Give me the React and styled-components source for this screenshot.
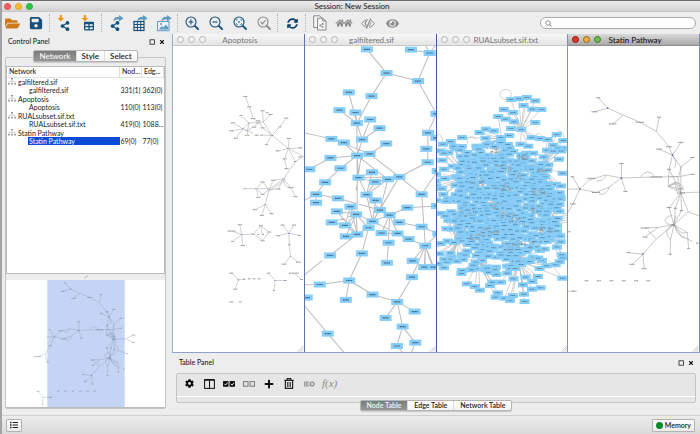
import { useId, useState } from 'react'
import styled, { createGlobalStyle, css } from 'styled-components'
import {
  FaCog, FaEye, FaFolderOpen, FaHome, FaList, FaPlus, FaSave,
  FaShareAlt, FaSyncAlt, FaTable, FaTimes,
} from 'react-icons/fa'

const theme = {
  navy: '#15507c',
  sky: '#5f9cc4',
  orange: '#f0961e',
  grey: '#8b8b8b',
  panel: '#ededed',
  line: '#c4c4c4',
  node: '#86cdf8',
  font: "Lato, 'Open Sans', sans-serif",
}

const GlobalStyle = createGlobalStyle`
  *, *::before, *::after { box-sizing: border-box; }
  body { margin: 0; background: #8f8f93; }
  button, input { font: inherit; color: inherit; }
`

const Shell = styled.div`
  min-height: 100vh;
  display: flex;
  flex-direction: column;
  border-top: 1px solid #6e6a70;
  border-left: 2px solid #a3a3a6;
  background: ${theme.panel};
  color: #1c1c1c;
  font-family: ${theme.font};
  font-size: 7px;
  line-height: 9px;
`

const TitleBar = styled.header`
  height: 11px;
  display: grid;
  grid-template-columns: 60px 1fr 60px;
  align-items: center;
  padding-left: 2px;
  background: linear-gradient(#ececec, #d2d2d2);
  border-bottom: 1px solid #c6c6c6;
`

const Lights = styled.div`
  display: flex;
  gap: 4px;
`

const Light = styled.button`
  width: 7px;
  height: 7px;
  padding: 0;
  border: 1px solid ${p => p.$edge};
  border-radius: 50%;
  background: ${p => p.$fill};
`

const AppTitle = styled.h1`
  margin: 0;
  font-size: 8px;
  font-weight: 400;
  text-align: center;
`

const Toolbar = styled.div`
  height: 22px;
  display: flex;
  align-items: center;
  padding: 0 4px 0 2px;
  background: ${theme.panel};
`

const ToolGroup = styled.div`
  display: flex;
  align-items: center;
  gap: 8px;

  & + & {
    margin-left: 5px;
    padding-left: 6px;
    border-left: 1px dotted #b5b5b5;
  }
`

const ToolButton = styled.button`
  width: 16px;
  height: 18px;
  padding: 0;
  border: 0;
  background: none;
  display: flex;
  align-items: center;
  justify-content: center;
  color: ${p => p.$color || theme.navy};

  svg { overflow: visible; flex: none; }
`

const SearchBox = styled.label`
  width: 156px;
  height: 12px;
  margin-left: auto;
  display: flex;
  align-items: center;
  gap: 3px;
  padding: 0 4px;
  border: 1px solid #a9a9a9;
  border-radius: 6px;
  background: #fff;
`

const SearchInput = styled.input`
  flex: 1;
  min-width: 0;
  height: 8px;
  padding: 0;
  border: 0;
  outline: 0;
  background: none;
`

const Body = styled.div`
  flex: 1;
  display: flex;
  min-height: 0;
`

const Sidebar = styled.aside`
  width: 164px;
  flex: none;
  display: flex;
  flex-direction: column;
  padding: 3px 0 6px 3px;
`

const PanelHeader = styled.div`
  display: flex;
  align-items: center;
  padding: ${p => p.$pad};
`

const PanelTitle = styled.h2`
  margin: 0;
  flex: 1;
  font-size: 7px;
  font-weight: 500;
`

const HeaderButton = styled.button`
  width: 6px;
  height: 6px;
  margin-left: 4px;
  padding: 0;
  border: 0;
  background: none;
  display: flex;
  color: #000;
`

const TabList = styled.div`
  align-self: center;
  display: flex;
  position: relative;
  z-index: 1;
  border: 1px solid #b4b4b4;
  border-radius: 2px;
  background: linear-gradient(#fff, #f4f4f4);
  box-shadow: 0 1px 1px #c9c9c9;
`

const Tab = styled.button`
  height: ${p => p.$height}px;
  padding: 0 ${p => p.$pad}px;
  border: 0;
  display: flex;
  align-items: center;
  background: none;
  font-size: ${p => p.$size}px;
  font-weight: 600;
  line-height: 9px;

  & + & { border-left: 1px solid #ddd; }

  ${p => p['aria-selected'] && css`
    color: #f4f4f4;
    background: linear-gradient(#7d7d7d, #959595);
  `}
`

const SidebarBox = styled.div`
  flex: 1;
  display: flex;
  flex-direction: column;
  margin-top: -5px;
  padding-top: 8px;
  border: 1px solid ${theme.line};
  border-radius: 2px;
`

const TableWell = styled.div`
  flex: 1;
  background: #fff;
  border: 1px solid #b9b9b9;
`

const NetworkTable = styled.table`
  width: 100%;
  table-layout: fixed;
  border-collapse: collapse;
`

const HeadCell = styled.th`
  width: ${p => p.$width || 'auto'};
  height: 10px;
  padding: 0 0 0 2px;
  border-right: 1px solid #ddd;
  border-bottom: 1px solid #e2e2e2;
  font-weight: 500;
  text-align: left;
  line-height: 9px;
`

const Row = styled.tr`
  height: ${p => (p.$group ? 9 : 8)}px;
  line-height: 8px;
`

const NameCell = styled.td`
  padding: 0 0 0 ${p => (p.$group ? 1 : 21)}px;
  white-space: nowrap;
`

const GroupName = styled.span`
  display: flex;
  align-items: center;
  gap: 2px;
`

const ChildName = styled.span`
  display: block;
  padding-left: 1px;
  color: ${p => (p.$selected ? '#fff' : 'inherit')};
  background: ${p => (p.$selected ? '#0a4bd6' : 'none')};
`

const CountCell = styled.td`
  padding: 0 0 0 1px;
  white-space: nowrap;
`

const Grip = styled.div`
  height: 6px;
  display: flex;
  align-items: center;
  justify-content: center;
  color: #999;
`

const Preview = styled.div`
  height: 128px;
  background: #fff;
  border-bottom: 1px solid #bbb;

  svg { display: block; width: 100%; height: 100%; }
`

const Main = styled.main`
  flex: 1;
  min-width: 0;
  display: flex;
  flex-direction: column;
  margin-left: 6px;
`

const Desk = styled.section`
  flex: 1;
  display: grid;
  grid-template-columns: repeat(4, minmax(0, 1fr));
  border-left: 1px solid #9fadcb;
  border-bottom: 1px solid #8fa2cc;
`

const Frame = styled.article`
  display: flex;
  flex-direction: column;
  border-right: 1px solid ${p => p.$edge};
  background: #fff;
`

const FrameBar = styled.div`
  height: 12px;
  display: grid;
  grid-template-columns: 33px 1fr 33px;
  align-items: center;
  padding: 0 1px 0 4px;
  border-bottom: 1px solid ${p => (p.$active ? '#8d8d8d' : '#c9c9c9')};
  background: ${p => (p.$active ? 'linear-gradient(#d9d9d9, #a9a9a9)' : 'linear-gradient(#f7f7f7, #e4e4e4)')};
`

const FrameTitle = styled.h3`
  margin: 0;
  font-size: 8px;
  line-height: 10px;
  font-weight: ${p => (p.$active ? 600 : 400)};
  color: ${p => (p.$active ? '#222' : '#757575')};
  text-align: center;
  white-space: nowrap;
`

const Canvas = styled.div`
  flex: 1;
  display: flex;
  min-height: 300px;

  svg { width: 100%; height: auto; flex: 1; }
`

const TablePanel = styled.section`
  display: flex;
  flex-direction: column;
  padding: 5px 4px 4px;
`

const TableBox = styled.div`
  height: 30px;
  margin-top: 6px;
  border: 1px solid ${theme.line};
  border-radius: 2px;
  background: #e6e6e6;
`

const TableTools = styled.div`
  height: 23px;
  display: flex;
  align-items: center;
  gap: 6px;
  padding: 0 5px 3px;
  border-bottom: 1px solid #fff;
`

const TableTool = styled.button`
  min-width: 14px;
  height: 14px;
  padding: 0;
  border: 0;
  background: none;
  display: flex;
  align-items: center;
  justify-content: center;
  color: ${p => p.$color || '#0a0a0a'};
`

const Fx = styled.span`
  font-family: 'Liberation Serif', serif;
  font-style: italic;
  font-size: 11px;
`

const BottomTabs = styled.div`
  align-self: center;
  display: flex;
  margin-top: -3px;
`

const StatusBar = styled.footer`
  height: 19px;
  display: flex;
  align-items: center;
  justify-content: space-between;
  padding: 0 5px 0 4px;
  border-top: 1px solid #d0d0d0;
  background: linear-gradient(#ececec, #dadada);
`

const StatusButton = styled.button`
  height: 13px;
  padding: 0 3px;
  display: flex;
  align-items: center;
  gap: 2px;
  border: 1px solid #b3b3b3;
  border-radius: 1px;
  background: linear-gradient(#fbfbfb, #ececec);
  font-weight: 600;
`

const Dot = styled.span`
  width: 7px;
  height: 7px;
  border-radius: 50%;
  background: #0b8a2c;
`

/* ---------- icons ---------- */

const DownArrow = ({ x = 0 }) => (
  <path transform={`translate(${x} 0)`} fill={theme.orange} d="M2.2 0h2.2v3h2.2L3.3 6.6 0 3h2.2z" />
)

const ShareArrow = () => (
  <path fill={theme.sky} d="M4.5 6.5C4.5 3 6.5 1.8 10 1.8V0l4.6 3.2L10 6.4V4.5C7.4 4.4 6 4.8 4.5 6.5z" />
)

const ImportIcon = ({ icon: Icon }) => (
  <svg width="14" height="17" viewBox="0 0 14 17">
    <Icon x="3" y="6" size="10" />
    <DownArrow x={0.5} />
  </svg>
)

const ExportIcon = ({ icon: Icon }) => (
  <svg width="15" height="17" viewBox="0 0 15 17">
    <Icon x="1" y="6" size="10" />
    <ShareArrow />
  </svg>
)

const OpenTable = ({ x, y }) => (
  <g transform={`translate(${x} ${y})`} fill="none" stroke={theme.navy}>
    <rect x="0" y="0.5" width="10" height="9" strokeWidth="1.2" />
    <path d="M0 3.5h10M0 6.5h10M3.4 1v8.5M6.7 1v8.5" strokeWidth="1" />
  </g>
)

const Photo = ({ x, y }) => (
  <g transform={`translate(${x} ${y})`}>
    <rect x="-0.5" y="0.5" width="11.5" height="9.2" fill="#edf3f7" stroke={theme.sky} />
    <path fill={theme.sky} d="M.8 8.5L3.8 5l1.6 1.6L8 3.6l2.2 3V8.5z" />
    <circle cx="3" cy="3" r="1" fill={theme.sky} />
  </g>
)

const Lens = ({ children, size = 14 }) => (
  <svg width={size} height={size} viewBox="0 0 14 14" fill="none" stroke="currentColor">
    <circle cx="6" cy="6" r="5" strokeWidth="1.1" />
    <path d="M9.8 9.8L13 13" strokeWidth="1.9" strokeLinecap="round" />
    {children}
  </svg>
)

const PagesIcon = () => (
  <svg width="14" height="16" viewBox="0 0 14 16" fill="#f4f4f4" stroke="currentColor">
    <path d="M.7.8h6l2 2v9.7h-8z" />
    <path d="M4.5 3.2h5.2L13 6v9H4.5z" />
    <path d="M9.7 3.2V6H13" fill="none" />
    <FaShareAlt x="6" y="8" size="5" color={theme.grey} />
  </svg>
)

const HousesIcon = () => (
  <svg width="16" height="10" viewBox="0 0 16 10">
    <FaHome x="-0.5" y="0.5" size="9" />
    <FaHome x="7.5" y="0.5" size="9" />
  </svg>
)

const HiddenEyeIcon = () => (
  <svg width="14" height="11" viewBox="0 0 14 11" fill="none" stroke="currentColor">
    <path d="M7 1.8C4 1.8 2 3.6.7 5.5 2 7.4 4 9.2 6 9.2M9.6 2.3c1.6.7 2.8 1.9 3.7 3.2-1.2 2-3 3.5-5.3 3.7" />
    <path d="M5.6 3.3c-1.9.9-1.6 3.4 0 4.2M9.8.4L5.4 10.6" strokeWidth="1.2" />
    <path d="M9.3 4.4c.8 1.5 0 2.9-1.4 3.4" />
  </svg>
)

const TreeIcon = () => (
  <svg width="8" height="7" viewBox="0 0 8 7" fill="#999" stroke="#999" strokeWidth=".4">
    <path d="M3 0h2v1.6H3zM0 5h1.8v1.6H0zM3.1 5h1.8v1.6H3.1zM6.2 5H8v1.6H6.2z" stroke="none" />
    <path d="M4 1.5V5M.9 5V3.3h6.2V5" fill="none" />
  </svg>
)

const FloatIcon = () => (
  <svg width="6" height="6" viewBox="0 0 6 6">
    <rect x="1" y="0.8" width="4.4" height="4.4" fill="none" stroke="#222" strokeWidth=".8" />
  </svg>
)

const ColumnsIcon = () => (
  <svg width="11" height="10" viewBox="0 0 11 10" fill="none" stroke="currentColor">
    <rect x="0.6" y="0.6" width="9.8" height="8.8" />
    <path d="M5.5.5v9M.5 1.2h10" />
  </svg>
)

const BoxesIcon = ({ checked }) => (
  <svg width="12" height="6" viewBox="0 0 12 6" stroke="currentColor" fill="none">
    <rect x="0.6" y="0.6" width="4.4" height="4.6" fill={checked ? 'currentColor' : 'none'} />
    <rect x="7.1" y="0.6" width="4.4" height="4.6" fill={checked ? 'currentColor' : 'none'} />
    {checked && <path d="M1.3 2.8l1.3 1.3 2-2.6M7.8 2.8l1.3 1.3 2-2.6" stroke="#fff" strokeWidth=".9" />}
  </svg>
)

const TrashIcon = () => (
  <svg width="10" height="11" viewBox="0 0 10 11" fill="none" stroke="currentColor">
    <path d="M.4 2.3h9.2M3.2 2V.7h3.6V2" strokeWidth="1.2" />
    <path d="M1.4 2.5v7.9h7.2V2.5" strokeWidth="1.2" />
    <path d="M3.5 4v5M5 4v5M6.5 4v5" strokeWidth=".8" />
  </svg>
)

const MappingIcon = () => (
  <svg width="11" height="6" viewBox="0 0 11 6" fill="none" stroke="currentColor" strokeWidth=".8">
    <path d="M0 1h5.5M0 3h5.5M0 5h5.5M2.8 1v4M.3 1v4" />
    <circle cx="8.2" cy="3" r="1.9" strokeWidth="1.2" />
  </svg>
)

const GripIcon = () => (
  <svg width="4" height="4" viewBox="0 0 4 4" stroke="currentColor" strokeWidth=".6">
    <path d="M.5 3.5l2-2.5M2 2.5l1.5-2" />
  </svg>
)

/* ---------- network drawings ---------- */

const ResizeCorner = ({ x, y }) => (
  <path d={`M${x - 18} ${y}l18 -18M${x - 12} ${y}l12 -12M${x - 6} ${y}l6 -6`} stroke="#999" strokeWidth="1.5" />
)

// [x, y, half width of the label]
const Marks = ({ points, color = '#777' }) => points.map(([x, y, w = 6]) => (
  <g key={`${x}-${y}`}>
    <rect x={x - w - 1} y={y - 3} width={w * 2 + 2} height="6" fill="#fff" opacity=".7" />
    <path d={`M${x - w} ${y}h${w * 2}`} stroke={color} strokeWidth="2.6" strokeDasharray="3.4 .8" />
  </g>
))

const apoptosisEdges = `
  M226 199L238 230L250 265L268 277L237 278L213 256M237 278L219 296L189 278M219 296L184 302M219 296L198 324
  M219 296L233 302L268 277M233 302L232 315M237 278L233 302M219 296L250 310M268 277L280 275L306 315M268 277L258 280M268 277L276 290
  M280 275L278 242M280 275L302 253M306 315L330 290L349 264M306 315L275 315M306 315L290 342M306 315L355 355
  M306 315L280 295M355 355L357 325M355 355L391 353M355 355L323 362M355 355L376 394M355 355L400 378L376 394M355 355L344 386L350 415
  M376 394L341 446M341 446L310 450M341 446L297 478M345 450L301 480M341 446L325 476M341 446Q340 470 362 472
  M341 446L362 472L376 498M297 478L310 450M297 478L278 455L259 475L278 492L297 478M259 475L224 475M259 475H297M259 475L265 500
  M297 478L325 476M297 478L286 523L255 538M286 523L276 555M286 523L305 550
  M215 612L210 583M215 612L185 602M215 612L188 633M215 612L219 645M215 612H240
  M273 587L298 605L278 630L251 610ZM273 587L277 612
  M357 608L338 584M357 608L372 584M357 608L325 616M357 608L388 615M357 608L358 643L362 678L342 701M362 678L385 695
  M206 748L185 728M206 748L196 776M206 748L224 746M316 750L296 728M316 750H346M316 750L312 780M372 728L395 747`

const apoptosisNodes = [
  [226, 199], [238, 230], [250, 265], [213, 256, 4], [189, 278], [184, 302], [198, 324], [232, 315], [260, 315],
  [275, 315, 4], [290, 343, 4], [278, 242], [302, 253], [292, 248, 4], [349, 264], [330, 290, 4], [253, 291],
  [278, 293], [265, 272], [357, 325], [391, 353], [323, 362], [344, 386], [376, 394, 4], [350, 415], [391, 380],
  [310, 450], [325, 476], [362, 472, 9], [376, 499], [278, 455], [278, 492], [265, 501], [224, 475, 3], [255, 538],
  [276, 555], [305, 550], [210, 583], [185, 602, 12], [188, 633, 4], [219, 645], [248, 611], [265, 612, 3],
  [279, 612, 3], [273, 586], [298, 605], [278, 631], [338, 584], [372, 584], [325, 616], [388, 615, 4], [358, 643, 4],
  [342, 701, 7], [385, 695, 7], [185, 728], [196, 776], [223, 746, 4], [238, 745, 4], [253, 745, 4], [268, 745, 4],
  [296, 728, 5], [346, 750, 4], [372, 728, 15], [395, 747, 4], [185, 814], [212, 814, 4], [206, 748, 4],
]
const apoptosisHubs = [[219, 296, 3], [237, 279, 3], [306, 316, 4], [355, 355, 4], [341, 446, 4], [297, 479, 4], [259, 475, 3], [286, 523, 3], [215, 613, 4], [357, 609, 4], [362, 678, 2], [316, 750, 3], [312, 780, 3]]

const statinEdges = `
  M97 202L125 233L85 244M125 233L172 254L140 280M172 254L221 275L270 302L278 260M270 302L308 348L318 373
  M278 355L318 373L343 335M318 373L343 408L378 380M343 408L337 437L375 430M318 373Q336 398 322 412
  M318 373L308 415L305 466L330 455L348 475L305 466L343 485L308 415M343 485L333 437L308 437M343 408L343 485M310 462Q330 444 348 466L350 478
  M305 466L327 458L330 478L346 472
  M166 398V441L178 480M166 441L119 432L68 448L42 474M119 432Q118 450 92 450M166 441L130 468L90 484L42 474
  M130 468Q122 492 100 490M166 441L260 438L337 437M222 438Q245 408 266 437
  M42 474L20 437M42 474H0M42 474L22 518L-3 558L-42 573M-3 558L5 602
  M343 485L402 483L442 465M402 483L442 502M343 485L308 530L322 580L327 530L343 485L345 538L322 580M343 485L365 542L322 580M365 542L408 558
  M322 580C288 582 288 556 318 552M322 580L328 552M322 580L275 588L235 590M275 588L237 616M322 580L270 622L245 598M270 622L230 668L187 663
  M230 668L198 698M230 668L234 710M322 580Q284 594 312 625L311 668M322 580L318 600L312 625M322 580L345 605L362 603L366 650
  M322 580L345 615L378 630M322 580L362 603M325 582Q330 612 356 620
  M-15 778L-40 748M-15 778L-17 815M-15 778H25`

const statinNodes = [
  [97, 202], [85, 244, 8], [140, 280, 11], [221, 275, 12], [278, 260], [308, 348, 9], [278, 355, 8], [343, 335, 8],
  [378, 380], [378, 430], [308, 415], [166, 398], [178, 481], [20, 437, 5], [76, 442, 12], [90, 484, 12], [22, 518, 9],
  [270, 438, 18], [343, 486, 12], [308, 529, 7], [327, 531, 5], [345, 538, 5], [321, 581, 6], [235, 590, 12],
  [237, 617, 7], [187, 663, 5], [198, 698, 7], [234, 711, 7], [311, 668, 5], [366, 651, 4], [392, 635, 4],
  [62, 747], [99, 747], [136, 747], [173, 747], [210, 747], [246, 747], [10, 601, 5], [25, 778, 7],
  [-42, 573, 18], [442, 465, 10], [442, 502, 7], [408, 558, 5], [-40, 748, 7], [-17, 815, 3],
]

const StatinDrawing = ({ ink = '#999', label = '#777' }) => (
  <>
    <path d={statinEdges} fill="none" stroke={ink} strokeWidth="1.6" />
    {statinNodes.map(([x, y, w = 6]) => (
      <path key={`${x}-${y}`} d={`M${x - w} ${y}h${w * 2}`} stroke={label} strokeWidth="2.6" strokeDasharray="3.4 .8" />
    ))}
    <path d="M123 233h4M316 373h4M164 441h4M40 474h4M228 667h4" stroke="#5555a8" strokeWidth="4" />
  </>
)

const galNodes = [
  [192, 58], [324, 59], [380, 69], [251, 129], [345, 153], [206, 198], [138, 187], [110, 240], [158, 247], [162, 279],
  [202, 268], [230, 294], [178, 328], [250, 340], [86, 326], [123, 337], [163, 376], [200, 371], [83, 383], [20, 417],
  [113, 414], [67, 456], [167, 442], [207, 426], [217, 455], [255, 447], [289, 440], [375, 308], [370, 356], [374, 396],
  [400, 251], [400, 323], [404, 422], [356, 492], [40, 492], [191, 493], [40, 517], [105, 504], [218, 510], [143, 529],
  [102, 543], [160, 552], [231, 539], [260, 554], [313, 532], [87, 576], [126, 585], [209, 573], [289, 576], [197, 592],
  [236, 608], [284, 609], [356, 589], [129, 618], [163, 612], [317, 626], [257, 637], [367, 646], [177, 669], [82, 675],
  [252, 697], [329, 691], [364, 710], [392, 710], [327, 740], [139, 750], [51, 762], [209, 792], [12, 801], [129, 808],
  [283, 814], [335, 843], [248, 862], [299, 888], [75, 909], [337, 936], [282, 946], [402, 527], [406, 610],
]
const galLinks = [
  [0, 3], [3, 4], [3, 5], [1, 2], [2, 4], [4, 30], [5, 9], [6, 9], [8, 9], [7, 9], [9, 12], [9, 16], [10, 12], [11, 12],
  [12, 16], [14, 15], [15, 16], [14, 17], [16, 17], [13, 17], [16, 18], [18, 19], [16, 20], [20, 21], [21, 34], [16, 25],
  [17, 26], [16, 22], [22, 23], [22, 24], [22, 26], [22, 35], [23, 35], [24, 35], [25, 35], [24, 25], [26, 29], [26, 33],
  [27, 31], [27, 30], [32, 33], [34, 37], [34, 36], [37, 42], [35, 47], [35, 42], [39, 41], [40, 41], [41, 45], [41, 46],
  [41, 47], [41, 49], [41, 53], [41, 54], [39, 46], [40, 54], [45, 46], [46, 54], [39, 54], [42, 47], [42, 43], [43, 44],
  [43, 48], [43, 50], [43, 51], [43, 56], [47, 49], [47, 43], [48, 52], [50, 51], [47, 55], [38, 47], [49, 54], [44, 77],
  [33, 57], [55, 57], [52, 78], [56, 60], [49, 58], [58, 65], [54, 59], [57, 61], [57, 62], [57, 63], [57, 64], [57, 78],
  [65, 66], [65, 67], [65, 69], [67, 70], [64, 70], [70, 71], [70, 72], [70, 73], [73, 75], [73, 76], [26, 47], [25, 42],
  [43, 47], [29, 27],
]
const galStray = `M5 308L86 326M163 376V552M175 376L160 480M59 690L5 733M5 763L51 762M5 825L75 909L125 967M380 69L367 45M380 69L398 45
  M282 946L300 967M337 936L325 967M192 58L176 46M265 480L231 539M163 480V552M5 510L40 492M367 646L366 710M367 646L385 700M5 420L20 417`

const linkPath = (nodes, links) => links.map(([a, b]) => `M${nodes[a].join(' ')}L${nodes[b].join(' ')}`).join('')

const BlueNodes = ({ nodes, w, h, ink }) => nodes.map(([x, y], i) => (
  <g key={i}>
    <rect x={x - w / 2} y={y - h / 2} width={w} height={h} fill={theme.node} />
    <path d={`M${x - w / 4} ${y}h${w / 2}`} stroke={ink} strokeWidth={h / 5} strokeDasharray="4 .8" />
  </g>
))

// small repeatable generator so the dense graph keeps its layout between renders
const makeRandom = (seed) => () => {
  seed = (seed * 1664525 + 1013904223) % 4294967296
  return seed / 4294967296
}

const rimNodes = [
  [227, 208], [251, 206], [275, 202], [300, 212], [265, 226], [291, 237], [318, 238], [206, 238], [234, 247], [189, 259],
  [211, 267], [236, 275], [300, 277], [258, 298], [227, 295], [222, 316], [197, 322], [152, 297], [133, 307], [176, 302],
  [151, 324], [81, 322], [47, 334], [24, 342], [124, 348], [97, 372], [364, 313], [384, 331], [289, 322], [314, 325],
  [337, 328], [40, 367], [16, 362], [127, 378], [22, 390], [60, 355], [354, 345], [384, 354], [371, 387], [80, 720],
  [151, 718], [122, 715], [95, 760], [119, 768], [134, 779], [184, 732], [172, 755], [197, 755], [165, 765], [235, 745],
  [188, 787], [181, 800], [208, 803], [233, 795], [224, 810], [266, 791], [268, 813], [271, 740], [308, 738], [291, 753],
  [263, 763], [316, 772], [290, 776], [27, 712], [35, 695], [10, 700], [361, 703], [381, 743], [320, 690], [382, 682],
  [365, 650], [50, 680],
]

function buildDenseNetwork() {
  const random = makeRandom(41)
  const nodes = [...rimNodes]
  for (let y = 336; y < 728; y += 10) {
    for (let x = 8; x < 404; x += 22) {
      const nx = x + (random() - 0.5) * 20
      const ny = y + (random() - 0.5) * 9
      const d = Math.hypot((nx - 203) / 208, (ny - 525) / 222)
      if (random() < (d < 0.72 ? 0.95 : d < 0.88 ? 0.52 : d < 1.12 ? 0.27 : 0)) nodes.push([Math.round(nx), Math.round(ny)])
    }
  }
  const hubs = [[258, 298], [200, 325], [320, 410], [100, 440], [250, 690], [130, 690], [340, 580], [70, 630], [200, 520]]
  const fans = nodes.map(([x, y]) => {
    const [hx, hy] = hubs.reduce((a, b) => (Math.hypot(a[0] - x, a[1] - y) < Math.hypot(b[0] - x, b[1] - y) ? a : b))
    return `M${hx} ${hy}L${x} ${y}`
  }).join('')
  // tangles of edge labels that lie over the nodes
  const spots = [[185, 525, 20], [290, 538, 24], [160, 600, 24], [120, 455, 22], [320, 420, 18], [205, 415, 20], [250, 570, 24], [270, 640, 22], [195, 470, 26], [310, 490, 22], [95, 545, 22], [225, 650, 22], [260, 380, 18], [175, 360, 16], [330, 600, 18], [215, 555, 20], [120, 620, 18], [245, 440, 20]]
  const tangles = spots.flatMap(([x, y, r]) => Array.from({ length: 17 }, () => {
    const px = Math.round(x + (random() - 0.5) * 2.2 * r)
    const py = Math.round(y + (random() - 0.5) * r)
    return `M${px} ${py}l${Math.round((random() - 0.2) * 12)} ${Math.round((random() - 0.5) * 10)}`
  })).join('')
  return { nodes, fans, tangles }
}

const dense = buildDenseNetwork()

const ApoptosisGraph = () => (
  <svg viewBox="9 48 393 916" preserveAspectRatio="xMidYMin slice" role="img" aria-label="Apoptosis network">
    <path d={apoptosisEdges} fill="none" stroke="#a0a0a0" strokeWidth="1.5" />
    <Marks points={apoptosisNodes} />
    <Marks points={apoptosisHubs} color="#7272b0" />
    <ResizeCorner x={401} y={963} />
  </svg>
)

const GalGraph = () => (
  <svg viewBox="6 48 393 916" preserveAspectRatio="xMidYMin slice" role="img" aria-label="galfiltered network">
    <path d={linkPath(galNodes, galLinks) + galStray} fill="none" stroke="#bcbcbc" strokeWidth="3" />
    <BlueNodes nodes={galNodes} w={36} h={18} ink="#466a85" />
    <ResizeCorner x={398} y={963} />
  </svg>
)

const RualGraph = () => (
  <svg viewBox="5 48 393 916" preserveAspectRatio="xMidYMin slice" role="img" aria-label="RUALsubset network">
    <g fill="none" stroke="#b4b4b4" strokeWidth="1.8">
      <path d={dense.fans} />
      <path d="M227 208C184 214 188 180 210 178C230 178 232 196 222 206M24 342C20 300 0 310 6 320M97 340C95 312 118 316 124 330M364 313C368 296 388 300 386 331M300 322C306 300 320 312 322 326M5 440C30 430 20 470 5 462" />
      <path d="M340 580L398 545M340 580L398 552M340 580L398 560M340 580L398 568M340 580L398 576M320 410L345 330M320 410L358 350M70 630L5 650M70 630L5 668M381 743L340 690" />
    </g>
    <BlueNodes nodes={dense.nodes} w={30} h={15} ink="#5586a8" />
    <path d={dense.tangles} fill="none" stroke="#92928f" strokeWidth="2" />
    <ResizeCorner x={397} y={963} />
  </svg>
)

const StatinGraph = () => (
  <svg viewBox="6 48 391 911" preserveAspectRatio="xMidYMin slice" role="img" aria-label="Statin Pathway network">
    <StatinDrawing />
    <ResizeCorner x={396} y={958} />
  </svg>
)

/* ---------- data ---------- */

const toolGroups = [
  [
    { label: 'Open session', icon: <FaFolderOpen size={15} />, color: '#cc7a1c' },
    { label: 'Save session', icon: <FaSave size={14} /> },
  ],
  [
    { label: 'Import network', icon: <ImportIcon icon={FaShareAlt} /> },
    { label: 'Import table', icon: <ImportIcon icon={FaTable} /> },
  ],
  [
    { label: 'Export network', icon: <ExportIcon icon={FaShareAlt} /> },
    { label: 'Export table', icon: <ExportIcon icon={OpenTable} /> },
    { label: 'Export image', icon: <ExportIcon icon={Photo} /> },
  ],
  [
    { label: 'Zoom in', icon: <Lens><path d="M3.5 6h5M6 3.5v5" strokeWidth="1.1" /></Lens> },
    { label: 'Zoom out', icon: <Lens><path d="M3.5 6h5" strokeWidth="1.1" /></Lens> },
    { label: 'Fit content', icon: <Lens><path d="M3.4 5V3.4H5M7 3.4h1.6V5M8.6 7v1.6H7M5 8.6H3.4V7M5 5l2 2M7 5L5 7" stroke="#5f9cc4" strokeWidth=".9" /></Lens> },
    { label: 'Zoom selected', icon: <Lens><path d="M3.6 6l1.8 1.8 3-3.5" strokeWidth="1.2" /></Lens>, color: theme.grey },
  ],
  [{ label: 'Refresh', icon: <FaSyncAlt size={11} />, color: '#0d3f68' }],
  [
    { label: 'New network from selection', icon: <PagesIcon />, color: theme.grey },
    { label: 'First neighbors', icon: <HousesIcon />, color: theme.grey },
    { label: 'Hide selected', icon: <HiddenEyeIcon />, color: theme.grey },
    { label: 'Show all', icon: <FaEye size={13} />, color: theme.grey },
  ],
]

const networks = [
  { group: 'galfiltered.sif', nodes: '331(1)', edges: '362(0)' },
  { group: 'Apoptosis', nodes: '110(0)', edges: '113(0)' },
  { group: 'RUALsubset.sif.txt', nodes: '419(0)', edges: '1088...' },
  { group: 'Statin Pathway', nodes: '69(0)', edges: '77(0)', selected: true },
]

const frames = [
  { title: 'Apoptosis', graph: ApoptosisGraph, edge: '#5b74ad' },
  { title: 'galfiltered.sif', graph: GalGraph, edge: '#3f5c9e' },
  { title: 'RUALsubset.sif.txt', graph: RualGraph, edge: '#7f92bb' },
  { title: 'Statin Pathway', graph: StatinGraph, edge: '#6f8cc4', active: true },
]

const tableTools = [
  { label: 'Table settings', icon: <FaCog size={9} /> },
  { label: 'Show columns', icon: <ColumnsIcon /> },
  { label: 'Select all', icon: <BoxesIcon checked /> },
  { label: 'Deselect all', icon: <BoxesIcon />, color: '#777' },
  { label: 'Add column', icon: <FaPlus size={10} /> },
  { label: 'Delete column', icon: <TrashIcon />, color: '#222' },
  { label: 'Map columns', icon: <MappingIcon />, color: '#888' },
  { label: 'Function builder', icon: <Fx>f(x)</Fx>, color: '#8a8a8a' },
]

const idleLights = Array(3).fill(['#f1f1f1', '#b5b5b5'])
const activeLights = [['#e0352b', '#8c1a14'], ['#f0b040', '#94661a'], ['#6cc04a', '#3b7a25']]
const windowLights = [['#fb5f57', '#e2504a'], ['#fdbb2e', '#e0a12a'], ['#2ac940', '#25ad36']]
const lightNames = ['Close', 'Minimize', 'Zoom']

function WindowLights({ colors, of }) {
  return (
    <Lights>
      {colors.map(([fill, edge], i) => (
        <Light key={lightNames[i]} aria-label={`${lightNames[i]} ${of}`} $fill={fill} $edge={edge} />
      ))}
    </Lights>
  )
}

function Tabs({ names, label, height, pad, size }) {
  const [current, setCurrent] = useState(names[0])
  return (
    <TabList role="tablist" aria-label={label}>
      {names.map(name => (
        <Tab
          key={name}
          role="tab"
          aria-selected={name === current}
          onClick={() => setCurrent(name)}
          $height={height}
          $pad={pad}
          $size={size}
        >
          {name}
        </Tab>
      ))}
    </TabList>
  )
}

function PanelHead({ title, pad }) {
  return (
    <PanelHeader $pad={pad}>
      <PanelTitle>{title}</PanelTitle>
      <HeaderButton aria-label={`Float ${title}`}><FloatIcon /></HeaderButton>
      <HeaderButton aria-label={`Close ${title}`}><FaTimes size={6} /></HeaderButton>
    </PanelHeader>
  )
}

function ControlPanel() {
  return (
    <Sidebar>
      <PanelHead title="Control Panel" pad="0 1px 4px 3px" />
      <Tabs names={['Network', 'Style', 'Select']} label="Control panel" height={10} pad={5} size={8} />
      <SidebarBox>
        <TableWell>
          <NetworkTable>
            <thead>
              <tr>
                <HeadCell>Network</HeadCell>
                <HeadCell $width="22px">Nod...</HeadCell>
                <HeadCell $width="22px">Edg...</HeadCell>
              </tr>
            </thead>
            {networks.map(net => (
              <tbody key={net.group}>
                <Row $group>
                  <NameCell $group colSpan={3}>
                    <GroupName><TreeIcon />{net.group}</GroupName>
                  </NameCell>
                </Row>
                <Row aria-selected={Boolean(net.selected)}>
                  <NameCell><ChildName $selected={net.selected}>{net.group}</ChildName></NameCell>
                  <CountCell>{net.nodes}</CountCell>
                  <CountCell>{net.edges}</CountCell>
                </Row>
              </tbody>
            ))}
          </NetworkTable>
        </TableWell>
        <Grip><GripIcon /></Grip>
        <Preview>
          <svg viewBox="-198 187 795 640" role="img" aria-label="Network overview">
            <rect x="7" y="187" width="390" height="640" fill="#c4d4f4" />
            <StatinDrawing ink="#8a93a8" label="#666e80" />
          </svg>
        </Preview>
      </SidebarBox>
    </Sidebar>
  )
}

export default function App() {
  const searchId = useId()

  return (
    <>
      <GlobalStyle />
      <Shell>
        <TitleBar>
          <WindowLights colors={windowLights} of="window" />
          <AppTitle>Session: New Session</AppTitle>
        </TitleBar>

        <Toolbar>
          {toolGroups.map(group => (
            <ToolGroup key={group[0].label}>
              {group.map(tool => (
                <ToolButton key={tool.label} aria-label={tool.label} $color={tool.color}>{tool.icon}</ToolButton>
              ))}
            </ToolGroup>
          ))}
          <SearchBox htmlFor={searchId} aria-label="Search">
            <svg width="7" height="7" viewBox="0 0 7 7" fill="none" stroke="#777">
              <circle cx="3" cy="3" r="2.3" strokeWidth=".8" />
              <path d="M4.8 4.8l1.8 1.8" />
            </svg>
            <SearchInput id={searchId} type="search" aria-label="Search" />
          </SearchBox>
        </Toolbar>

        <Body>
          <ControlPanel />
          <Main>
            <Desk>
              {frames.map(({ title, graph: Graph, edge, active }) => (
                <Frame key={title} $edge={edge}>
                  <FrameBar $active={active}>
                    <WindowLights colors={active ? activeLights : idleLights} of={title} />
                    <FrameTitle $active={active}>{title}</FrameTitle>
                  </FrameBar>
                  <Canvas><Graph /></Canvas>
                </Frame>
              ))}
            </Desk>

            <TablePanel>
              <PanelHead title="Table Panel" pad="0 2px 0 3px" />
              <TableBox>
                <TableTools>
                  {tableTools.map(tool => (
                    <TableTool key={tool.label} aria-label={tool.label} $color={tool.color}>{tool.icon}</TableTool>
                  ))}
                </TableTools>
              </TableBox>
              <BottomTabs>
                <Tabs names={['Node Table', 'Edge Table', 'Network Table']} label="Tables" height={9} pad={6} size={7} />
              </BottomTabs>
            </TablePanel>
          </Main>
        </Body>

        <StatusBar>
          <StatusButton aria-label="Task history"><FaList size={8} /></StatusButton>
          <StatusButton><Dot />Memory</StatusButton>
        </StatusBar>
      </Shell>
    </>
  )
}
